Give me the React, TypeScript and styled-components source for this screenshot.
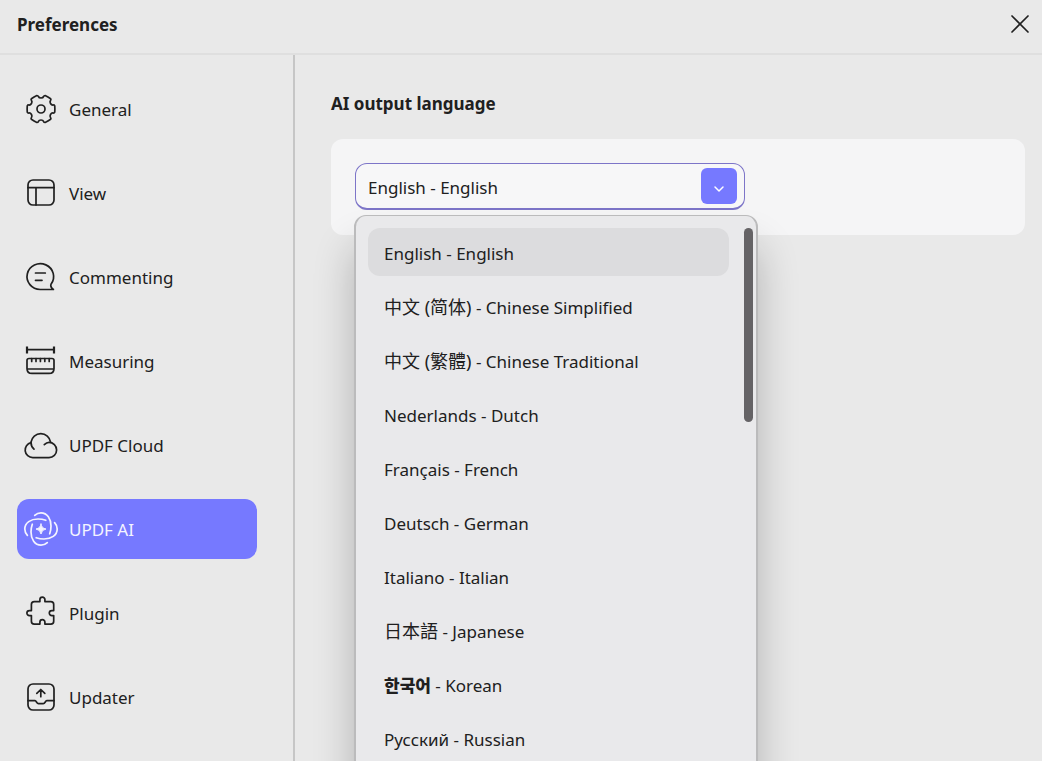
import React, { useState } from "react";
import styled, { createGlobalStyle } from "styled-components";

const Global = createGlobalStyle`
  *, *::before, *::after { box-sizing: border-box; }
  body {
    margin: 0;
    background: #e9e9e9;
    color: #202020;
    font-family: "Noto Sans", "Noto Sans CJK SC", sans-serif;
    font-size: 17px;
    line-height: 24px;
  }
  button, select { font: inherit; color: inherit; }
`;

const Window = styled.div`
  display: flex;
  flex-direction: column;
  height: 100vh;
  overflow: hidden;
`;

const TitleBar = styled.header`
  display: flex;
  align-items: center;
  justify-content: space-between;
  flex: none;
  height: 55px;
  padding: 0 12px 6px 17px;
  border-bottom: 2px solid #dfdfdf;
`;

const Title = styled.h1`
  margin: 0;
  padding-top: 2px;
  font-size: 17px;
  font-weight: 700;
`;

const CloseButton = styled.button`
  display: flex;
  padding: 0;
  border: 0;
  background: none;
`;

const Body = styled.div`
  display: flex;
  flex: 1;
  min-height: 0;
`;

const Sidebar = styled.nav`
  display: flex;
  flex-direction: column;
  gap: 24px;
  flex: none;
  width: 295px;
  padding: 24px 36px 0 17px;
  border-right: 2px solid #c6c6c6;
`;

const NavItem = styled.button<{ $active: boolean }>`
  display: flex;
  align-items: center;
  gap: 10px;
  flex: none;
  height: 60px;
  padding: 0 6px;
  border: 0;
  border-radius: 12px;
  background: ${(p) => (p.$active ? "#7679ff" : "transparent")};
  color: ${(p) => (p.$active ? "#f4f4ff" : "#202020")};
  text-align: left;
`;

const NavLabel = styled.span`
  padding-top: 2px;
`;

const Icon = styled.svg`
  flex: none;
  fill: none;
  stroke: currentColor;
  stroke-width: 1.7;
  stroke-linecap: round;
  stroke-linejoin: round;
`;

const Main = styled.main`
  flex: 1;
  min-width: 0;
  padding: 37px 17px 0 36px;
`;

const Heading = styled.h2`
  margin: 0 0 23px;
  font-size: 17px;
  font-weight: 700;
`;

const Card = styled.section`
  padding: 24px;
  border-radius: 12px;
  background: #f5f5f6;
`;

const Field = styled.div`
  position: relative;
  width: 390px;
  max-width: 100%;
  height: 48px;
`;

const Select = styled.select`
  display: block;
  appearance: none;
  width: 100%;
  height: 47px;
  padding: 4px 48px 0 12px;
  border: 1px solid #7d75c8;
  border-bottom-width: 2px;
  border-radius: 12px;
  background: #f7f7f8;
  outline: 0;
`;

const Arrow = styled.span`
  position: absolute;
  top: 5px;
  right: 8px;
  display: flex;
  align-items: center;
  justify-content: center;
  width: 36px;
  height: 36px;
  padding-top: 6px;
  border-radius: 6px;
  background: #7679ff;
  color: #fff;
  pointer-events: none;
`;

const Popup = styled.div`
  position: absolute;
  top: 52px;
  left: -1px;
  display: flex;
  gap: 15px;
  width: 404px;
  padding: 12px 3px 24px 12px;
  border: 2px solid #bbbbbc;
  border-top-width: 1px;
  border-radius: 12px;
  background: #e9e9eb;
  box-shadow: 0 32px 40px rgba(0, 0, 0, 0.24);
`;

const Options = styled.ul`
  display: flex;
  flex-direction: column;
  gap: 6px;
  flex: 1;
  margin: 0;
  padding: 0;
  list-style: none;
`;

const Option = styled.button<{ $selected: boolean }>`
  display: block;
  width: 100%;
  height: 48px;
  padding: 4px 16px 0;
  border: 0;
  border-radius: 12px;
  background: ${(p) => (p.$selected ? "#dcdcde" : "transparent")};
  text-align: left;
  white-space: nowrap;
`;

const Native = styled.span<{ $script?: "han" | "hangul" }>`
  font-size: ${(p) => (p.$script === "han" ? "18px" : "inherit")};
  font-weight: ${(p) => (p.$script === "hangul" ? 900 : 400)};
  line-height: 1;
`;

const ScrollThumb = styled.div`
  flex: none;
  width: 9px;
  height: 194px;
  border-radius: 5px;
  background: #656366;
`;

const point = (deg: number, r: number) => {
  const a = (deg * Math.PI) / 180;
  return `${(18 + r * Math.cos(a)).toFixed(2)} ${(18 + r * Math.sin(a)).toFixed(2)}`;
};

// Six flat teeth joined by rounded notches.
const gearPath =
  [0, 60, 120, 180, 240, 300]
    .map(
      (d, i) =>
        `${i ? "L" : "M"}${point(d - 13, 14.1)} Q${point(d, 14)} ${point(d + 13, 14.1)} ` +
        `Q${point(d + 18, 13.8)} ${point(d + 18, 12.9)} C${point(d + 20, 10.6)} ${point(d + 40, 10.6)} ${point(d + 42, 12.9)} ` +
        `Q${point(d + 42, 13.8)} ${point(d + 47, 14.1)}`
    )
    .join(" ") + "Z";

const icons: Record<string, React.ReactNode> = {
  General: (
    <>
      <path d={gearPath} />
      <circle cx="18" cy="18" r="4" />
    </>
  ),
  View: (
    <>
      <rect x="5" y="5" width="26" height="25" rx="5" />
      <path d="M5 12.7H31M13 12.7V30" />
    </>
  ),
  Commenting: (
    <path d="M17.2 30.5H30.4C28.4 29 27.2 27.4 28 25.3A13.3 12.9 0 1 0 17.2 30.5ZM12.5 14H22.3M12.5 21.3H19" />
  ),
  Measuring: (
    <>
      <path d="M4 6.7H31" />
      <path d="M4 3.4V10.6M31 3.4V10.6" strokeWidth="2.2" strokeLinecap="butt" />
      <path d="M6 15.5H29Q31 15.5 31 17.5V25.4Q31 30.4 26 30.4H9Q4 30.4 4 25.4V17.5Q4 15.5 6 15.5ZM4 26H31" />
      <path d="M8.7 15.5V18.5M13 15.5V18.5M17.4 15.5V18.5M21.8 15.5V18.5M26.2 15.5V18.5" />
    </>
  ),
  "UPDF Cloud": (
    <>
      <path d="M11 22.2C8.7 20.2 8 18 8 15.2A9.9 10 0 0 1 27.6 15.2" />
      <path d="M21.3 17.7C22.8 16.2 24.4 15.4 26 15.4A7.6 7.6 0 0 1 26 30.6H9.8A7.6 7.6 0 0 1 8 15.6" />
    </>
  ),
  "UPDF AI": (
    <>
      {[0, 90, 180, 270].map((angle) => (
        <path
          key={angle}
          transform={`rotate(${angle} 18 18)`}
          d="M4.4 24.3C2.6 22.4 1.8 20.3 1.8 18C1.8 11.7 7.9 8 15 8C18.3 8 20.6 8.5 22.8 9.3"
        />
      ))}
      <path
        d="M18 13Q18.6 17.4 23 18Q18.6 18.6 18 23Q17.4 18.6 13 18Q17.4 17.4 18 13Z"
        fill="currentColor"
        strokeWidth="1"
      />
    </>
  ),
  Plugin: (
    <path d="M11.3 6.6H16.9V4.6A2.5 2.5 0 0 1 21.9 4.6V6.6H27.8Q30.7 6.6 30.7 9.5V15.6H28.8A2.5 2.5 0 0 0 28.8 20.6H30.7V26.2Q30.7 29.1 27.8 29.1H21.9V27.2A2.5 2.5 0 0 0 16.9 27.2V29.1H11.3Q8.4 29.1 8.4 26.2V20.6H6.4A2.5 2.5 0 0 1 6.4 15.6H8.4V9.5Q8.4 6.6 11.3 6.6Z" />
  ),
  Updater: (
    <>
      <rect x="5" y="5" width="26" height="26" rx="5" />
      <path d="M5 21.7H12C13.5 21.7 13.5 24.7 15.5 24.7H20.2C22.3 24.7 22.2 21.7 23.8 21.7H31" />
      <path d="M17.8 17.7V10.5M13.8 14.3L17.8 10.5L21.8 14.3" />
    </>
  ),
};

type Language = { native: string; name: string; script?: "han" | "hangul" };

const languages: Language[] = [
  { native: "English", name: "English" },
  { native: "中文 (简体)", name: "Chinese Simplified", script: "han" },
  { native: "中文 (繁體)", name: "Chinese Traditional", script: "han" },
  { native: "Nederlands", name: "Dutch" },
  { native: "Français", name: "French" },
  { native: "Deutsch", name: "German" },
  { native: "Italiano", name: "Italian" },
  { native: "日本語", name: "Japanese", script: "han" },
  { native: "한국어", name: "Korean", script: "hangul" },
  { native: "Русский", name: "Russian" },
];

export default function App() {
  const [section, setSection] = useState("UPDF AI");
  const [language, setLanguage] = useState("English");

  return (
    <>
      <Global />
      <Window>
        <TitleBar>
          <Title>Preferences</Title>
          <CloseButton aria-label="Close">
            <Icon width="20" height="20" viewBox="0 0 20 20" aria-hidden="true">
              <path d="M2 2L18 18M18 2L2 18" />
            </Icon>
          </CloseButton>
        </TitleBar>
        <Body>
          <Sidebar>
            {Object.keys(icons).map((name) => (
              <NavItem key={name} $active={name === section} onClick={() => setSection(name)}>
                <Icon width="36" height="36" viewBox="0 0 36 36" aria-hidden="true">
                  {icons[name]}
                </Icon>
                <NavLabel>{name}</NavLabel>
              </NavItem>
            ))}
          </Sidebar>
          <Main>
            <Heading>
              <label htmlFor="language">AI output language</label>
            </Heading>
            <Card>
              <Field>
                <Select id="language" value={language} onChange={(e) => setLanguage(e.target.value)}>
                  {languages.map((l) => (
                    <option key={l.name} value={l.name}>
                      {l.native} - {l.name}
                    </option>
                  ))}
                </Select>
                <Arrow>
                  <Icon width="12" height="12" viewBox="0 0 12 12" aria-hidden="true">
                    <path d="M2 4L6 8L10 4" strokeWidth="1.5" />
                  </Icon>
                </Arrow>
                <Popup>
                  <Options>
                    {languages.map((l) => (
                      <li key={l.name}>
                        <Option $selected={l.name === language} onClick={() => setLanguage(l.name)}>
                          <Native $script={l.script}>{l.native}</Native> - {l.name}
                        </Option>
                      </li>
                    ))}
                  </Options>
                  <ScrollThumb />
                </Popup>
              </Field>
            </Card>
          </Main>
        </Body>
      </Window>
    </>
  );
}
